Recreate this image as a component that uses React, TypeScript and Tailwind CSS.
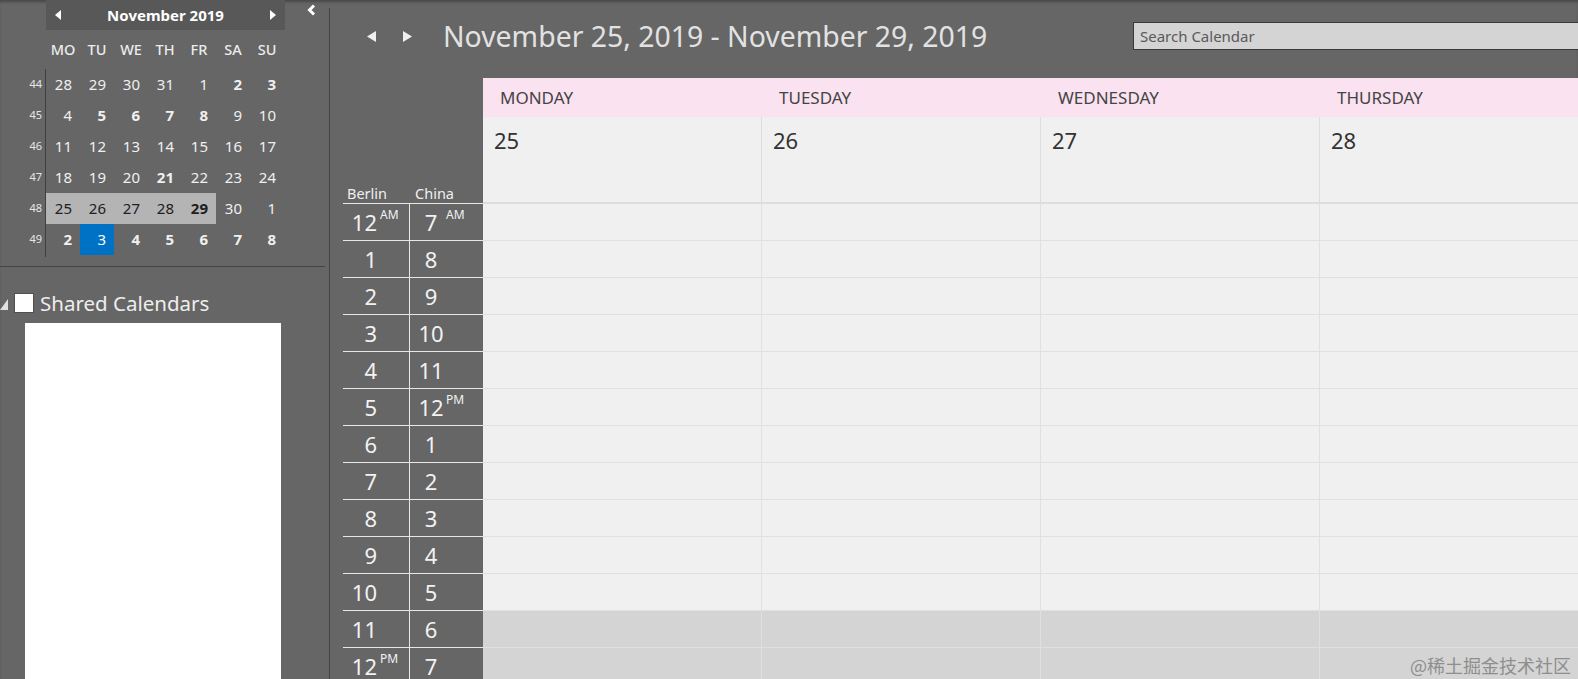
import React from 'react';

type Day = { d: number; b?: boolean; sel?: boolean; today?: boolean };

const weeks: { n: number; days: Day[] }[] = [
  { n: 44, days: [{ d: 28 }, { d: 29 }, { d: 30 }, { d: 31 }, { d: 1 }, { d: 2, b: true }, { d: 3, b: true }] },
  { n: 45, days: [{ d: 4 }, { d: 5, b: true }, { d: 6, b: true }, { d: 7, b: true }, { d: 8, b: true }, { d: 9 }, { d: 10 }] },
  { n: 46, days: [{ d: 11 }, { d: 12 }, { d: 13 }, { d: 14 }, { d: 15 }, { d: 16 }, { d: 17 }] },
  { n: 47, days: [{ d: 18 }, { d: 19 }, { d: 20 }, { d: 21, b: true }, { d: 22 }, { d: 23 }, { d: 24 }] },
  {
    n: 48,
    days: [
      { d: 25, sel: true },
      { d: 26, sel: true },
      { d: 27, sel: true },
      { d: 28, sel: true },
      { d: 29, sel: true, b: true },
      { d: 30 },
      { d: 1 },
    ],
  },
  {
    n: 49,
    days: [
      { d: 2, b: true },
      { d: 3, today: true },
      { d: 4, b: true },
      { d: 5, b: true },
      { d: 6, b: true },
      { d: 7, b: true },
      { d: 8, b: true },
    ],
  },
];

const dayNames = ['MO', 'TU', 'WE', 'TH', 'FR', 'SA', 'SU'];
const columns = [
  { name: 'MONDAY', date: 25 },
  { name: 'TUESDAY', date: 26 },
  { name: 'WEDNESDAY', date: 27 },
  { name: 'THURSDAY', date: 28 },
];

const hours = Array.from({ length: 13 }, (_, i) => ({
  berlin: i === 0 || i === 12 ? 12 : i,
  berlinSup: i === 0 ? 'AM' : i === 12 ? 'PM' : '',
  china: (i + 7) % 12 || 12,
  chinaSup: i === 0 ? 'AM' : i === 5 ? 'PM' : '',
  late: i >= 11,
}));

// Berlin numbers sit flush right in their box, China numbers are centred;
// the AM/PM mark always starts at the same spot in the cell
const TimeLabel = ({ value, sup, right }: { value: number; sup: string; right?: boolean }) => (
  <div className="flex items-start h-full">
    <div
      className={`self-center text-[22px] leading-none text-[#f2f2f2] ${
        right ? 'w-[34px] text-right' : 'w-[42px] text-center'
      }`}
    >
      {value}
    </div>
    {sup && (
      <span
        className={`mt-[5px] text-[12px] leading-none text-[#f2f2f2] ${right ? 'ml-[3px]' : 'ml-[-6px]'}`}
      >
        {sup}
      </span>
    )}
  </div>
);

const MiniCalendar = () => (
  <div className="flex flex-col">
    <div className="flex items-start">
      <div className="w-[46px]" />
      <div className="w-[239px] h-[30px] bg-[#585858] flex items-center justify-between px-[9px]">
        <svg width="6" height="10" viewBox="0 0 6 10">
          <polygon points="6,0 0,5 6,10" fill="#ffffff" />
        </svg>
        <span className="text-[15px] font-bold text-white">November 2019</span>
        <svg width="6" height="10" viewBox="0 0 6 10">
          <polygon points="0,0 6,5 0,10" fill="#ffffff" />
        </svg>
      </div>
      <div className="ml-[22px] mt-[4px]">
        <svg width="9" height="12" viewBox="0 0 9 12">
          <polyline points="7,1.5 2.5,6 7,10.5" fill="none" stroke="#ffffff" strokeWidth="3" />
        </svg>
      </div>
    </div>
    <div className="flex h-[39px] items-center">
      <div className="w-[46px]" />
      {dayNames.map((n) => (
        <div key={n} className="w-[34px] text-center text-[14.5px] font-medium text-[#ececec]">
          {n}
        </div>
      ))}
    </div>
    <div className="flex">
      <div className="w-[46px] border-r border-[#3f3f3f] pb-[2px]">
        {weeks.map((w) => (
          <div key={w.n} className="h-[31px] flex items-center justify-end pr-[3px] text-[11px] text-[#e6e6e6]">
            {w.n}
          </div>
        ))}
      </div>
      <div className="flex flex-col">
        {weeks.map((w) => (
          <div key={w.n} className="flex h-[31px]">
            {w.days.map((d, i) => (
              <div
                key={i}
                className={`w-[34px] flex items-center justify-end pr-[8px] text-[15px] ${
                  d.today ? 'bg-[#0072c6] text-white' : d.sel ? 'bg-[#b4b4b4] text-[#202020]' : 'text-[#f0f0f0]'
                } ${d.b ? 'font-bold' : ''}`}
              >
                {d.d}
              </div>
            ))}
          </div>
        ))}
      </div>
    </div>
  </div>
);

export default function App() {
  return (
    <div className="relative w-[1578px] h-[679px] overflow-hidden bg-[#666666] flex font-['Noto_Sans',sans-serif] shadow-[inset_0_3px_3px_-1px_rgba(0,0,0,0.3)]">
      {/* sidebar */}
      <div className="w-[329px] shrink-0 flex flex-col">
        <MiniCalendar />
        <div className="mt-[9px] w-[325px] h-px bg-[#444444]" />
        <div className="mt-[26px] flex items-center h-[20px]">
          <svg width="8" height="11" viewBox="0 0 8 11" className="mt-[2px]">
            <polygon points="8,0 8,11 0,11" fill="#e0e0e0" />
          </svg>
          <div className="ml-[6px] w-[20px] h-[20px] bg-white border border-[#505050]" />
          <span className="ml-[6px] text-[20.5px] leading-none text-[#eeeeee]">Shared Calendars</span>
        </div>
        <div className="mt-[10px] ml-[25px] w-[256px] flex-1 bg-white" />
      </div>
      <div className="w-px shrink-0 bg-[#444444] mt-[8px]" />

      {/* main */}
      <div className="flex-1 flex flex-col min-w-0">
        <div className="h-[78px] shrink-0 flex items-center pb-[6px]">
          <div className="ml-[37px] flex items-center gap-[27px]">
            <svg width="9" height="11" viewBox="0 0 9 11">
              <polygon points="9,0 0,5.5 9,11" fill="#f0f0f0" />
            </svg>
            <svg width="9" height="11" viewBox="0 0 9 11">
              <polygon points="0,0 9,5.5 0,11" fill="#f0f0f0" />
            </svg>
          </div>
          <div className="ml-[31px] text-[28.4px] leading-none text-[#e2e2e2] whitespace-nowrap">
            November 25, 2019 - November 29, 2019
          </div>
          <div className="ml-auto w-[460px] shrink-0 -mr-[15px] h-[28px] bg-[#d4d4d4] border border-[#3a3a3a] flex items-center px-[6px] text-[15px] text-[#5a5a5a]">
            Search Calendar
          </div>
        </div>

        <div className="flex flex-1 min-h-0">
          {/* time columns */}
          <div className="w-[153px] shrink-0 flex flex-col">
            <div className="h-[125px] shrink-0 flex items-end text-[14.5px] leading-[20px] text-[#efefef]">
              <span className="ml-[17px]">Berlin</span>
              <span className="ml-[28px]">China</span>
            </div>
            {hours.map((h, i) => (
              <div key={i} className="ml-[13px] h-[37px] shrink-0 flex border-t border-[#e8e8e8]">
                <div className="w-[67px] border-r border-[#e8e8e8]">
                  <TimeLabel value={h.berlin} sup={h.berlinSup} right />
                </div>
                <div className="flex-1">
                  <TimeLabel value={h.china} sup={h.chinaSup} />
                </div>
              </div>
            ))}
          </div>

          {/* day columns */}
          <div className="flex-1 flex overflow-hidden">
            {columns.map((c) => (
              <div key={c.name} className="w-[279px] shrink-0 flex flex-col">
                <div className="h-[39px] shrink-0 bg-[#fae2f1] flex items-center pl-[17px] text-[17px] text-[#444444]">
                  {c.name}
                </div>
                <div className="h-[87px] shrink-0 bg-[#f0f0f0] border-r border-b-2 border-[#dddddd] pl-[11px] pt-[7px] text-[22px] text-[#333333]">
                  {c.date}
                </div>
                {hours.map((h, i) => (
                  <div
                    key={i}
                    className={`h-[37px] shrink-0 border-r border-b border-[#e0e0e0] ${
                      h.late ? 'bg-[#d4d4d4]' : 'bg-[#f0f0f0]'
                    }`}
                  />
                ))}
              </div>
            ))}
          </div>
        </div>
      </div>

      <div className="absolute right-[7px] bottom-[5px] text-[18px] leading-none text-[#8e8e8e] font-['Noto_Sans_CJK_SC',sans-serif]">
        @稀土掘金技术社区
      </div>
    </div>
  );
}
